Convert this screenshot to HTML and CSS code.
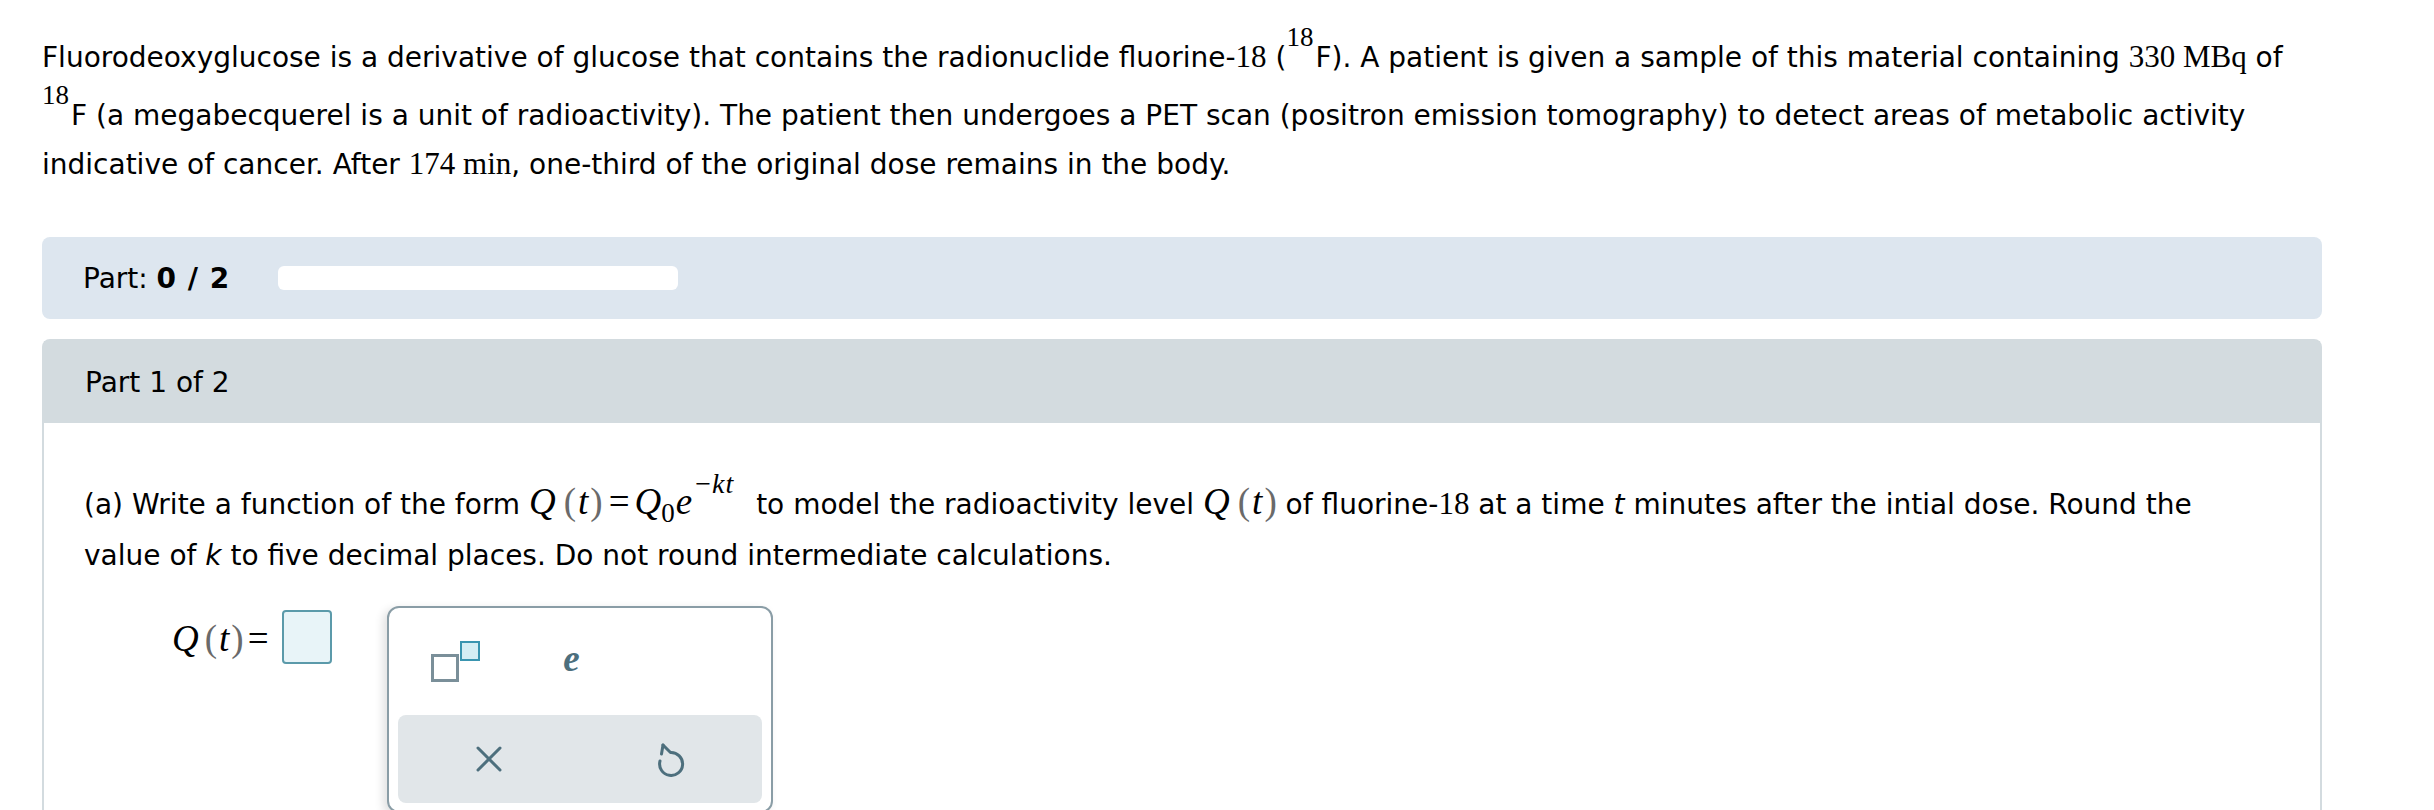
FILE: index.html
```html
<!DOCTYPE html>
<html>
<head>
<meta charset="utf-8">
<link rel="stylesheet" href="styles.css">
</head>
<body>
<div class="page">
  <p class="intro">Fluorodeoxyglucose is a derivative of glucose that contains the radionuclide fluorine-<span class="m">18</span> (<span class="iso"><span class="sup">18</span>F</span>). A patient is given a sample of this material containing <span class="m">330 MBq</span> of<br><span class="iso"><span class="sup">18</span>F</span> (a megabecquerel is a unit of radioactivity). The patient then undergoes a PET scan (positron emission tomography) to detect areas of metabolic activity<br>indicative of cancer. After <span class="m">174 min</span>, one-third of the original dose remains in the body.</p>

  <div class="progress-box">
    <span class="progress-label">Part: <b>0 / 2</b></span>
    <span class="progress-bar"></span>
  </div>

  <div class="part">
    <div class="part-head">Part 1 of 2</div>
    <div class="part-body">
      <p class="question">(a) Write a function of the form <span class="mx"><i class="v">Q</i><span class="par pl">(</span><i class="v t">t</i><span class="par pr">)</span><span class="eq">=</span><i class="v">Q</i><span class="sub">0</span><i class="v e">e</i><span class="exp">−<i>k</i><i>t</i></span></span> to model the radioactivity level <span class="mx"><i class="v">Q</i><span class="par pl">(</span><i class="v t">t</i><span class="par pr">)</span></span> of fluorine-<span class="m">18</span> at a time <i>t</i> minutes after the intial dose. Round the<br>value of <i>k</i> to five decimal places. Do not round intermediate calculations.</p>

      <div class="answer">
        <span class="mx qlabel"><i class="v">Q</i><span class="par pl">(</span><i class="v t">t</i><span class="par pr">)</span><span class="eq">=</span></span>
        <span class="input-box"></span>
        <div class="keypad">
          <div class="keys-top">
            <div class="key">
              <svg width="52" height="42" viewBox="0 0 52 42">
                <rect x="2.5" y="14.5" width="25" height="25" fill="#fff" stroke="#7a8f99" stroke-width="3"/>
                <rect x="31" y="1" width="18" height="18" fill="#d5eef4" stroke="#3a95b0" stroke-width="2"/>
              </svg>
            </div>
            <div class="key"><span class="e-key">e</span></div>
          </div>
          <div class="keys-bottom">
            <div class="key2">
              <svg width="26" height="26" viewBox="0 0 26 26">
                <path d="M2 2 L24 24 M24 2 L2 24" stroke="#4d6f7d" stroke-width="3" stroke-linecap="round" fill="none"/>
              </svg>
            </div>
            <div class="key2">
              <svg width="28" height="35" viewBox="0 0 28 35">
                <path d="M3 19 A11.5 11.5 0 1 0 13.5 10.5 L6 3" stroke="#4d6f7d" stroke-width="3" stroke-linecap="round" stroke-linejoin="round" fill="none"/>
                <path d="M6 3 L4.5 12" stroke="#4d6f7d" stroke-width="3" stroke-linecap="round" fill="none"/>
              </svg>
            </div>
          </div>
        </div>
      </div>
    </div>
  </div>
</div>
</body>
</html>
```

FILE: styles.css
```css
* { box-sizing: border-box; }
html, body { margin: 0; padding: 0; background: #fff; }
body {
  font-family: "DejaVu Sans", Verdana, sans-serif;
  font-size: 28px;
  color: #000;
}
.page {
  width: 2322px;
  padding-left: 42px;
  padding-top: 24px;
}
.intro {
  margin: 0;
  line-height: 48px;
  white-space: nowrap;
}
.m {
  font-family: "Liberation Serif", serif;
  font-size: 31px;
}
.iso .sup {
  font-family: "Liberation Serif", serif;
  font-size: 27px;
  line-height: 1;
  vertical-align: 21px;
  margin-right: 2px;
}
.progress-box {
  margin-top: 48px;
  height: 82px;
  background: #dde6ef;
  border-radius: 8px;
  display: flex;
  align-items: center;
  padding-left: 41px;
}
.progress-label b { letter-spacing: 1px; }
.progress-bar {
  width: 400px;
  height: 24px;
  background: #fff;
  border-radius: 6px;
  margin-left: 48px;
}
.part {
  margin-top: 20px;
  border: 2px solid #d3dbdf;
  border-bottom: none;
  border-radius: 8px 8px 0 0;
  height: 480px;
}
.part-head {
  background: #d3dbdf;
  height: 82px;
  display: flex;
  align-items: center;
  padding-left: 41px;
}
.part-body {
  padding: 47px 40px 0 40px;
}
.question {
  margin: 0;
  line-height: 51px;
  white-space: nowrap;
}
.mx {
  font-family: "Liberation Serif", serif;
  font-size: 37px;
}
.v { font-style: italic; }
.t { margin: 0 2px; }
.par { color: #6a6a6a; }
.pl { margin-left: 8px; }
.eq { margin: 0 5px 0 6px; }
.sub {
  font-size: 27px;
  vertical-align: -8px;
  line-height: 1;
  margin-right: 1px;
}
.exp {
  font-size: 28px;
  vertical-align: 21px;
  line-height: 1;
  margin-left: 3px;
  margin-right: 14px;
}
.exp i { font-style: italic; margin-left: 1px; }
.answer {
  display: flex;
  align-items: flex-start;
  padding-left: 88px;
  margin-top: 25px;
}
.qlabel {
  margin-top: 14px;
  line-height: 1;
}
.qlabel .pl { margin-left: 6px; }
.qlabel .eq { margin: 0 0 0 4px; }
.input-box {
  width: 50px;
  height: 54px;
  margin-left: 13px;
  margin-top: 4px;
  border: 2px solid #5b9aaa;
  background: #e8f4f8;
  border-radius: 4px;
}
.keypad {
  margin-left: 55px;
  width: 386px;
  height: 207px;
  border: 2px solid #8a9da6;
  border-radius: 12px;
  background: #fff;
  box-shadow: -4px 3px 10px rgba(0, 0, 0, 0.12);
  padding: 0 9px 8px 9px;
  display: flex;
  flex-direction: column;
}
.keys-top {
  display: flex;
  height: 107px;
  align-items: center;
}
.key {
  width: 116px;
  display: flex;
  justify-content: center;
  align-items: center;
}
.e-key {
  font-family: "Liberation Serif", serif;
  font-style: italic;
  font-weight: bold;
  font-size: 37px;
  color: #4d6f7d;
  margin-top: -6px;
}
.keys-bottom {
  height: 88px;
  background: #e1e6e9;
  border-radius: 8px;
  display: flex;
}
.key2 {
  flex: 1;
  display: flex;
  justify-content: center;
  align-items: center;
}
```
